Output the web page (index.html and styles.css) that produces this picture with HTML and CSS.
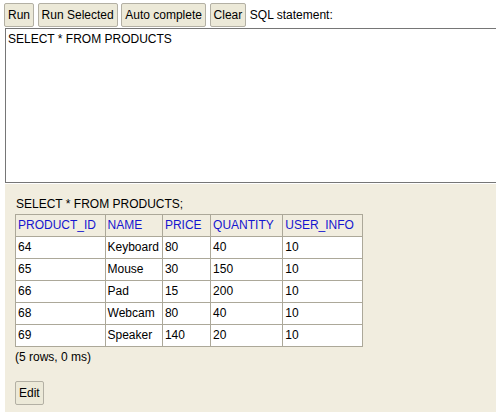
FILE: index.html
```html
<!DOCTYPE html>
<html>
<head>
<meta charset="utf-8">
<title>H2 Console</title>
<link rel="stylesheet" href="styles.css">
</head>
<body>
<div class="query">
  <div class="toolbar">
    <button class="btn">Run</button>
    <button class="btn">Run Selected</button>
    <button class="btn">Auto complete</button>
    <button class="btn">Clear</button>
    <span class="label">SQL statement:</span>
  </div>
  <textarea class="sql">SELECT * FROM PRODUCTS</textarea>
</div>
<div class="result">
  <p class="stmt">SELECT * FROM PRODUCTS;</p>
  <table class="grid">
    <thead>
      <tr><th>PRODUCT_ID</th><th>NAME</th><th>PRICE</th><th>QUANTITY</th><th>USER_INFO</th></tr>
    </thead>
    <tbody>
      <tr><td>64</td><td>Keyboard</td><td>80</td><td>40</td><td>10</td></tr>
      <tr><td>65</td><td>Mouse</td><td>30</td><td>150</td><td>10</td></tr>
      <tr><td>66</td><td>Pad</td><td>15</td><td>200</td><td>10</td></tr>
      <tr><td>68</td><td>Webcam</td><td>80</td><td>40</td><td>10</td></tr>
      <tr><td>69</td><td>Speaker</td><td>140</td><td>20</td><td>10</td></tr>
    </tbody>
  </table>
  <p class="info">(5 rows, 0 ms)</p>
  <button class="btn">Edit</button>
</div>
</body>
</html>
```

FILE: styles.css
```css
html, body {
  margin: 0;
  padding: 0;
  height: 100%;
  overflow: hidden;
  background: #ffffff;
  font-family: "Liberation Sans", Arial, sans-serif;
  font-size: 12px;
  color: #000;
}
body {
  display: flex;
  flex-direction: column;
}
.query {
  padding: 3px 0 0 4px;
}
.toolbar {
  height: 24px;
  display: flex;
  align-items: center;
  gap: 3.6px;
}
.btn {
  font-family: "Liberation Sans", Arial, sans-serif;
  font-size: 12px;
  line-height: 14px;
  height: 24px;
  padding: 4px 3px;
  margin: 0;
  background: #ece9d8;
  border: 1px solid #b3b0a4;
  border-radius: 2px;
  color: #000;
}
.label {
  margin-left: 0;
}
.sql {
  display: block;
  box-sizing: border-box;
  margin: 1px 0 0 1px;
  width: calc(100% + 20px);
  height: 155px;
  padding: 3px 2px 2px 2px;
  border: 1px solid #767676;
  font-family: "Liberation Sans", Arial, sans-serif;
  font-size: 12px;
  line-height: 14px;
  resize: none;
  color: #000;
}
.result {
  flex: 1;
  margin: 1px 0 0 5px;
  background: #f1eddf;
  padding: 13px 0 0 10px;
}
.stmt {
  margin: 0 0 3px 1px;
  line-height: 14px;
}
.grid {
  border-collapse: collapse;
}
.grid th, .grid td {
  border: 1px solid #aca899;
  font-size: 12px;
  line-height: 15px;
  text-align: left;
  font-weight: normal;
  white-space: nowrap;
}
.grid th {
  color: #1515d0;
  padding: 3px 8.5px 3px 2px;
}
.grid td {
  background: #ffffff;
  padding: 3px 3px 3px 2px;
}
.info {
  margin: 3px 0 0 0;
  line-height: 14px;
}
.result .btn {
  margin-top: 17px;
}
```
